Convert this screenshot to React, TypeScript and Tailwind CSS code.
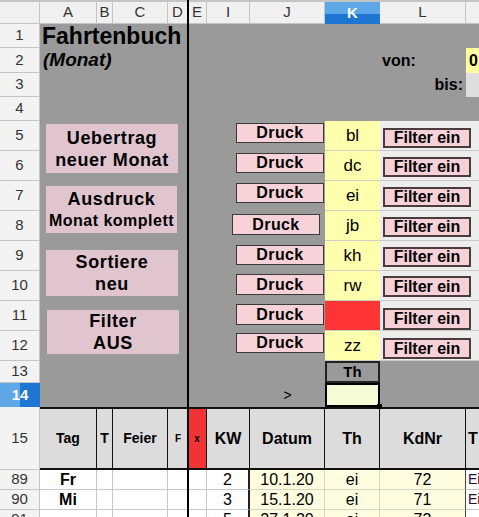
import React from "react";

const rowHeads = [
  { n: "1", cls: "row-start-2" },
  { n: "2", cls: "row-start-3" },
  { n: "3", cls: "row-start-4" },
  { n: "4", cls: "row-start-5" },
  { n: "5", cls: "row-start-6" },
  { n: "6", cls: "row-start-7" },
  { n: "7", cls: "row-start-8" },
  { n: "8", cls: "row-start-9" },
  { n: "9", cls: "row-start-10" },
  { n: "10", cls: "row-start-11" },
  { n: "11", cls: "row-start-12" },
  { n: "12", cls: "row-start-13" },
  { n: "13", cls: "row-start-14" },
  { n: "15", cls: "row-start-16" },
  { n: "89", cls: "row-start-17" },
  { n: "90", cls: "row-start-18" },
  { n: "91", cls: "row-start-19" },
];

const colHeads = [
  { l: "A", cls: "col-start-2" },
  { l: "B", cls: "col-start-3" },
  { l: "C", cls: "col-start-4" },
  { l: "D", cls: "col-start-5" },
  { l: "E", cls: "col-start-6" },
  { l: "I", cls: "col-start-7" },
  { l: "J", cls: "col-start-8" },
  { l: "L", cls: "col-start-10" },
  { l: "", cls: "col-start-11" },
];

// K column codes, rows 5-12
const codes = [
  { t: "bl", row: "row-start-6", bg: "bg-[#ffffae]" },
  { t: "dc", row: "row-start-7", bg: "bg-[#ffffae]" },
  { t: "ei", row: "row-start-8", bg: "bg-[#ffffae]" },
  { t: "jb", row: "row-start-9", bg: "bg-[#ffffae]" },
  { t: "kh", row: "row-start-10", bg: "bg-[#ffffae]" },
  { t: "rw", row: "row-start-11", bg: "bg-[#ffffae]" },
  { t: "", row: "row-start-12", bg: "bg-[#ff3535]" },
  { t: "zz", row: "row-start-13", bg: "bg-[#ffffae]" },
];

const druck = [
  "row-start-6 mt-[2px] ml-[29px]",
  "row-start-7 mt-[2px] ml-[29px]",
  "row-start-8 mt-[2px] ml-[29px]",
  "row-start-9 mt-[3px] ml-[25px] h-[21px]",
  "row-start-10 mt-[4px] ml-[29px]",
  "row-start-11 mt-[3px] ml-[29px] h-[21px]",
  "row-start-12 mt-[3px] ml-[29px] h-[21px]",
  "row-start-13 mt-[2px] ml-[29px]",
];

const filter = [
  "row-start-6 mt-[7px]",
  "row-start-7 mt-[6px]",
  "row-start-8 mt-[6px]",
  "row-start-9 mt-[6px]",
  "row-start-10 mt-[6px]",
  "row-start-11 mt-[5px] h-[21px]",
  "row-start-12 mt-[7px] h-[22px]",
  "row-start-13 mt-[7px] h-[21px]",
];

const data = [
  { cls: "row-start-17", tag: "Fr", kw: "2", datum: "10.1.20", th: "ei", kd: "72", t: "Einkauf" },
  { cls: "row-start-18", tag: "Mi", kw: "3", datum: "15.1.20", th: "ei", kd: "71", t: "Einkauf" },
  { cls: "row-start-19", tag: "", kw: "5", datum: "27.1.20", th: "ei", kd: "73", t: "" },
];

const bigBtn =
  "col-start-2 col-end-6 flex flex-col items-center justify-center bg-[#e0c5ce] font-bold leading-[22px]";

export default function App() {
  return (
    <div className="w-[479px] h-[517px] overflow-hidden bg-white font-['Liberation_Sans',Arial,sans-serif] text-black">
      <div className="grid grid-cols-[40px_57px_16px_55px_20px_19px_43px_75px_55px_86px_40px] grid-rows-[24px_24px_25px_24px_24px_30px_30px_30px_30px_30px_30px_30px_30px_22px_24px_63px_20px_20px_20px]">
        {/* column letters */}
        <div className="col-start-1 row-start-1 bg-[#f0f0f0] border-r border-b border-t-2 border-[#c4c4c4]" />
        {colHeads.map((c) => (
          <div
            key={c.cls}
            className={`${c.cls} row-start-1 flex items-center justify-center bg-[#f0f0f0] border-r border-b border-t-2 border-[#c4c4c4] text-[15px] text-[#333]`}
          >
            {c.l}
          </div>
        ))}
        <div className="col-start-9 row-start-1 flex items-center justify-center bg-[linear-gradient(#5ea8e8_0_55%,#1c76d2_55%)] border-t-2 border-[#c4c4c4] text-[15px] font-bold text-white">
          K
        </div>

        {/* row numbers */}
        {rowHeads.map((r) => (
          <div
            key={r.cls}
            className={`col-start-1 ${r.cls} flex items-center justify-center bg-[#f3f3f3] border-r border-b border-[#c4c4c4] text-[15px] text-[#333]`}
          >
            {r.n}
          </div>
        ))}
        <div className="col-start-1 row-start-15 flex items-center justify-center bg-[linear-gradient(90deg,#5ea8e8_0_50%,#1c76d2_50%)] text-[15px] font-bold text-white">
          14
        </div>

        {/* grey sheet area */}
        <div className="col-start-2 col-end-12 row-start-2 row-end-16 bg-[#9a9a9a]" />

        {/* title */}
        <div className="col-start-2 col-end-6 row-start-2 pl-[2px] text-[23px] font-bold leading-[24px] whitespace-nowrap">
          Fahrtenbuch
        </div>
        <div className="col-start-2 col-end-6 row-start-3 pl-[3px] text-[19px] font-bold italic leading-[24px] whitespace-nowrap">
          (Monat)
        </div>

        {/* von / bis */}
        <div className="col-start-10 row-start-3 flex items-center pl-[2px] text-[16px] font-bold">von:</div>
        <div className="col-start-10 row-start-4 flex items-center justify-end pr-[3px] text-[16px] font-bold">bis:</div>
        <div className="col-start-11 row-start-3 flex items-center bg-[#ffff9e] pl-[3px] text-[16px] font-bold">01.01.20</div>
        <div className="col-start-11 row-start-4 bg-[#dedede]" />

        {/* K / L list area */}
        {codes.map((c) => (
          <div
            key={c.row}
            className={`col-start-9 ${c.row} ${c.bg} flex items-center justify-center border-b border-[#cfcfbf] text-[17px]`}
          >
            {c.t}
          </div>
        ))}
        {codes.map((c) => (
          <div
            key={"l" + c.row}
            className={`col-start-10 col-end-12 ${c.row} bg-[#ededed] border-b border-[#c8c8c8]`}
          />
        ))}

        {/* big left buttons */}
        <div className={`${bigBtn} row-start-6 row-end-8 mt-[3px] mb-[8px] ml-[6px] mr-[10px]`}>
          <span className="text-[18px] tracking-[0.6px]">Uebertrag</span>
          <span className="text-[18px] tracking-[0.6px]">neuer Monat</span>
        </div>
        <div className={`${bigBtn} row-start-8 row-end-10 mt-[5px] mb-[8px] ml-[6px] mr-[11px]`}>
          <span className="text-[18px] tracking-[0.6px]">Ausdruck</span>
          <span className="text-[16px] tracking-[0.5px]">Monat komplett</span>
        </div>
        <div className={`${bigBtn} row-start-10 row-end-12 mt-[9px] mb-[5px] ml-[6px] mr-[10px]`}>
          <span className="text-[18px] tracking-[0.6px]">Sortiere</span>
          <span className="text-[18px] tracking-[0.6px]">neu</span>
        </div>
        <div className={`${bigBtn} row-start-12 row-end-14 mt-[9px] mb-[7px] ml-[7px] mr-[9px]`}>
          <span className="text-[18px] tracking-[0.6px]">Filter</span>
          <span className="text-[18px] tracking-[0.6px]">AUS</span>
        </div>

        {/* Druck buttons */}
        {druck.map((d) => (
          <div
            key={d}
            className={`col-start-7 col-end-9 ${d} self-start flex h-[20px] w-[88px] items-center justify-center bg-[#f8d2d9] border border-[#3a3a3a] text-[16px] font-bold tracking-[0.4px] leading-none`}
          >
            Druck
          </div>
        ))}

        {/* Filter ein buttons */}
        {filter.map((f) => (
          <div
            key={f}
            className={`col-start-10 col-end-12 ${f} self-start ml-[3px] flex h-[20px] w-[88px] items-center justify-center bg-[#f6d1d8] border-2 border-[#4a3c3c] text-[16px] font-bold leading-none`}
          >
            Filter ein
          </div>
        ))}

        {/* K13 / K14 */}
        <div className="col-start-9 row-start-14 flex items-center justify-center bg-[#9a9a9a] border-2 border-[#222] text-[15px] font-bold">
          Th
        </div>
        <div className="relative col-start-9 row-start-15 bg-[#f6fdd6] border-2 border-black">
          <div className="absolute right-[-4px] bottom-[-4px] h-[5px] w-[5px] bg-black" />
        </div>
        <div className="col-start-8 row-start-15 flex items-center justify-center pt-[1px] text-[14px]">&gt;</div>

        {/* header row 15 */}
        <div className="col-start-2 row-start-16 flex items-center justify-center bg-[#dcdcdc] border-t-2 border-b-2 border-r border-[#111] text-[14px] font-bold">Tag</div>
        <div className="col-start-3 row-start-16 flex items-center justify-center bg-[#dcdcdc] border-t-2 border-b-2 border-r border-[#111] text-[14px] font-bold">T</div>
        <div className="col-start-4 row-start-16 flex items-center justify-center bg-[#dcdcdc] border-t-2 border-b-2 border-r border-[#111] text-[14px] font-bold">Feier</div>
        <div className="col-start-5 row-start-16 flex items-center justify-center bg-[#dcdcdc] border-t-2 border-b-2 border-[#111] text-[10px] font-bold">F</div>
        <div className="col-start-6 row-start-16 flex items-center justify-center bg-[#f03434] border-t-2 border-b-2 border-r border-[#111] text-[10px] font-bold">x</div>
        <div className="col-start-7 row-start-16 flex items-center justify-center bg-[#dcdcdc] border-t-2 border-b-2 border-r border-[#111] text-[16px] font-bold">KW</div>
        <div className="col-start-8 row-start-16 flex items-center justify-center bg-[#dcdcdc] border-t-2 border-b-2 border-r border-[#111] text-[16px] font-bold">Datum</div>
        <div className="col-start-9 row-start-16 flex items-center justify-center bg-[#dcdcdc] border-t-2 border-b-2 border-r border-[#111] text-[16px] font-bold">Th</div>
        <div className="col-start-10 row-start-16 flex items-center justify-center bg-[#dcdcdc] border-t-2 border-b-2 border-r border-[#111] text-[16px] font-bold">KdNr</div>
        <div className="col-start-11 row-start-16 flex items-center pl-[2px] bg-[#dcdcdc] border-t-2 border-b-2 border-[#111] text-[16px] font-bold">T</div>

        {/* data rows */}
        {data.map((r) => (
          <React.Fragment key={r.cls}>
            <div className={`col-start-2 ${r.cls} flex items-center justify-center border-r border-b border-[#c8c8c8] text-[16px] font-bold`}>{r.tag}</div>
            <div className={`col-start-3 ${r.cls} border-r border-b border-[#c8c8c8]`} />
            <div className={`col-start-4 ${r.cls} border-r border-b border-[#c8c8c8]`} />
            <div className={`col-start-5 ${r.cls} border-b border-[#c8c8c8]`} />
            <div className={`col-start-6 ${r.cls} border-r border-b border-[#c8c8c8]`} />
            <div className={`col-start-7 ${r.cls} flex items-center justify-center border-r-2 border-r-[#222] border-b border-b-[#c8c8c8] text-[16px]`}>{r.kw}</div>
            <div className={`col-start-8 ${r.cls} flex items-center justify-center bg-[#fffde0] border-r border-b border-[#d6d6c4] text-[16px]`}>{r.datum}</div>
            <div className={`col-start-9 ${r.cls} flex items-center justify-center bg-[#fffde0] border-r border-b border-[#d6d6c4] text-[16px]`}>{r.th}</div>
            <div className={`col-start-10 ${r.cls} flex items-center justify-center bg-[#fffde0] border-r border-r-[#444] border-b border-b-[#d6d6c4] text-[16px]`}>{r.kd}</div>
            <div className={`col-start-11 ${r.cls} flex items-center pl-[2px] border-b border-[#c8c8c8] text-[14px] text-[#2a1030] whitespace-nowrap`}>{r.t}</div>
          </React.Fragment>
        ))}

        {/* heavy separator between D and E */}
        <div className="col-start-6 row-start-1 row-end-20 -ml-px border-l-2 border-black pointer-events-none" />
      </div>
    </div>
  );
}
